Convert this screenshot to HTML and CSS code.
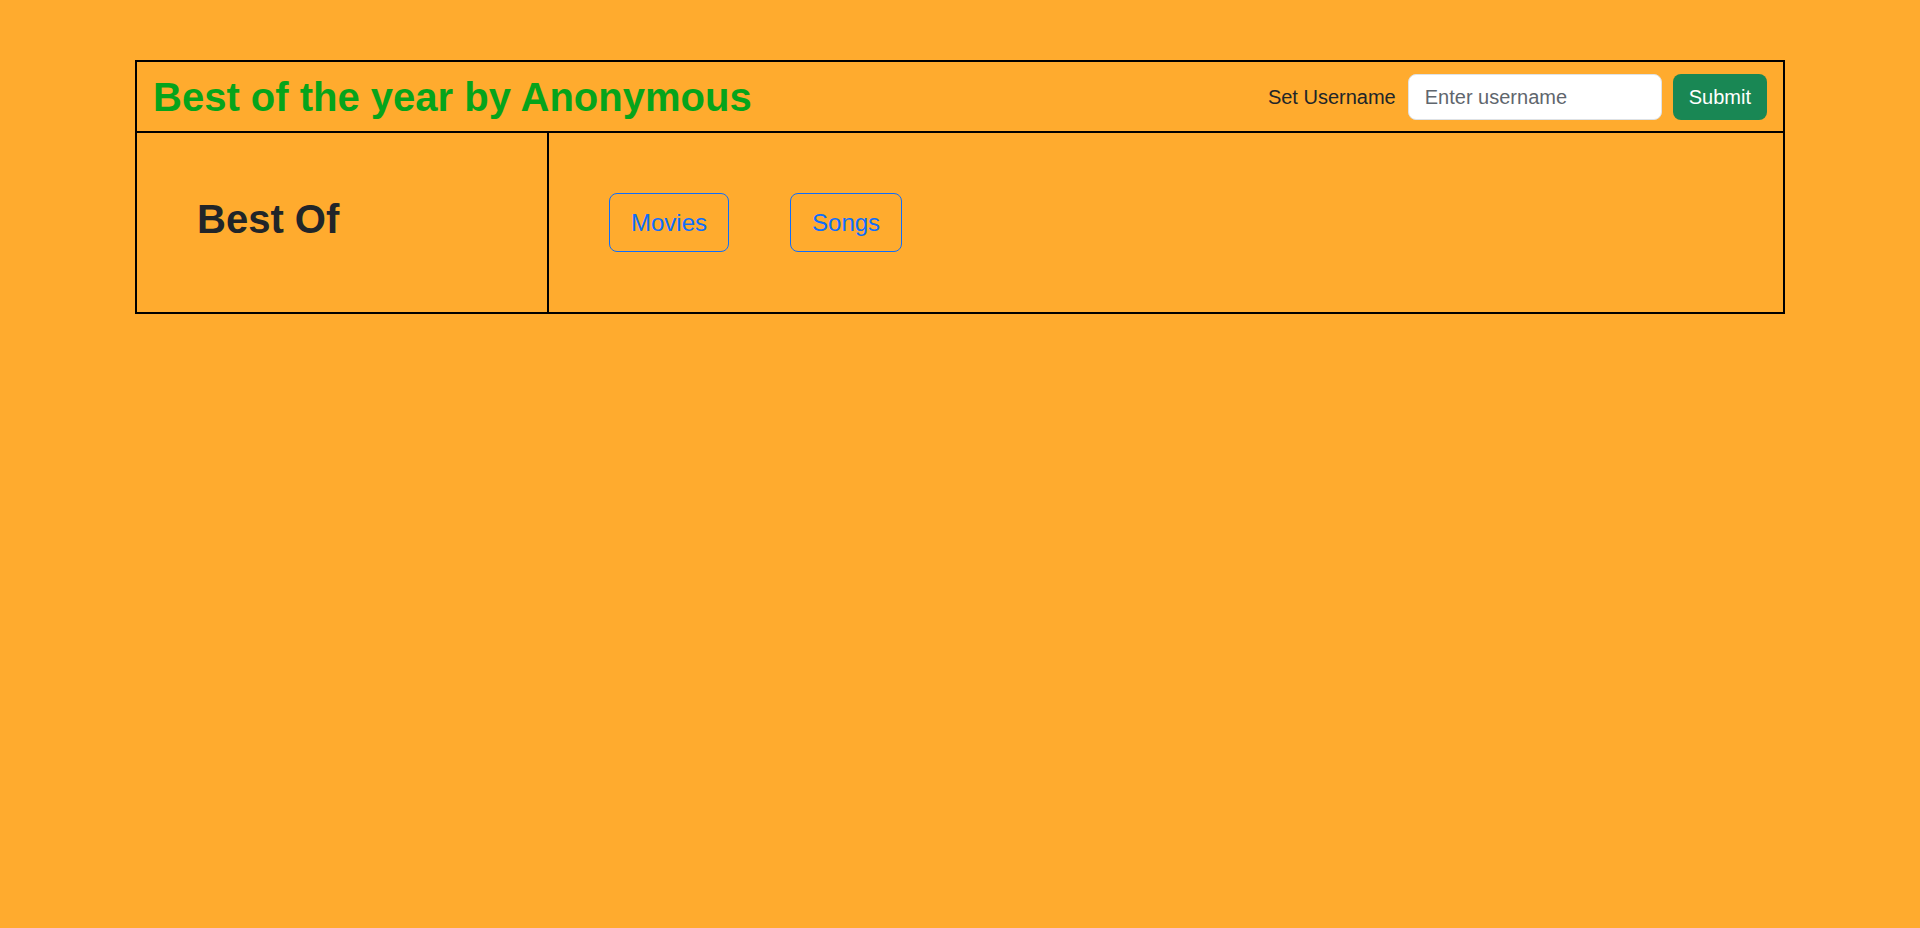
FILE: index.html
```html
<!DOCTYPE html>
<html lang="en">
<head>
<meta charset="utf-8">
<title>Best of the year</title>
<link rel="stylesheet" href="styles.css">
</head>
<body>
  <div class="frame">
    <header class="topbar">
      <h1 class="title">Best of the year by Anonymous</h1>
      <form class="user-form">
        <label class="user-label" for="username">Set Username</label>
        <input class="user-input" id="username" type="text" placeholder="Enter username">
        <button class="submit-btn" type="button">Submit</button>
      </form>
    </header>
    <main class="content">
      <aside class="side">
        <h2 class="side-title">Best Of</h2>
      </aside>
      <nav class="links">
        <a class="link-btn" href="#">Movies</a>
        <a class="link-btn" href="#">Songs</a>
      </nav>
    </main>
  </div>
</body>
</html>
```

FILE: styles.css
```css
* {
  box-sizing: border-box;
}

body {
  margin: 0;
  background: #ffab2e;
  font-family: "Liberation Sans", Arial, sans-serif;
  color: #212529;
}

.frame {
  width: 1650px;
  margin: 60px auto 0;
  border: 2px solid #000;
}

.topbar {
  display: flex;
  align-items: center;
  justify-content: space-between;
  height: 71px;
  padding: 0 16px;
  border-bottom: 2px solid #000;
}

.title {
  margin: 0;
  font-size: 40px;
  line-height: 1.2;
  font-weight: 700;
  color: #06a41b;
}

.user-form {
  display: flex;
  align-items: center;
}

.user-label {
  font-size: 20px;
  margin-right: 12px;
  padding-top: 2px;
  color: #212529;
}

.user-input {
  width: 254px;
  height: 46px;
  padding: 8px 16px 6px;
  font-family: inherit;
  font-size: 20px;
  color: #212529;
  background: #fff;
  border: 1px solid #dee2e6;
  border-radius: 8px;
  outline: none;
}

.user-input::placeholder {
  color: #5f666d;
}

.submit-btn {
  margin-left: 11px;
  height: 46px;
  padding: 2px 16px 0;
  font-family: inherit;
  font-size: 20px;
  color: #fff;
  background: #198754;
  border: none;
  border-radius: 8px;
}

.content {
  display: grid;
  grid-template-columns: 412px 1fr;
  height: 179px;
}

.side {
  display: flex;
  align-items: center;
  padding-left: 60px;
  border-right: 2px solid #000;
}

.side-title {
  margin: 0 0 8px;
  font-size: 40px;
  line-height: 1.2;
  font-weight: 700;
  color: #212529;
}

.links {
  display: flex;
  align-items: center;
  gap: 61px;
  padding-left: 60px;
}

.link-btn {
  display: inline-block;
  padding: 10.5px 21px;
  font-size: 24px;
  line-height: 1.5;
  color: #0d6efd;
  text-decoration: none;
  border: 1px solid #0d6efd;
  border-radius: 8px;
}
```
